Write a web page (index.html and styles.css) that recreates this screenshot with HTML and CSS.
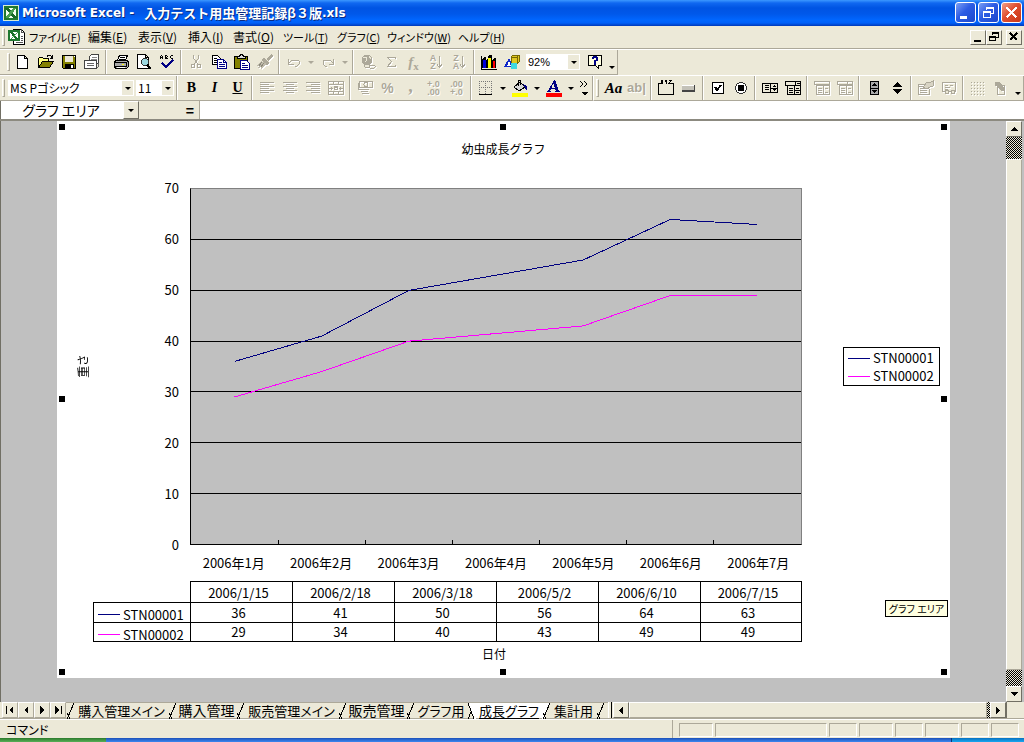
FILE: index.html
```html
<!DOCTYPE html>
<html lang="ja">
<head>
<meta charset="utf-8">
<title>Microsoft Excel - 入力テスト用虫管理記録β３版.xls</title>
<link rel="stylesheet" href="styles.css">
</head>
<body>
<header class="titlebar">
  <svg class="app-icon" width="16" height="16" viewBox="0 0 16 16"><rect width="16" height="16" fill="#d8ecd4"/><rect x="1" y="1" width="14" height="14" fill="#207830"/><rect x="3" y="3" width="10" height="10" fill="#f4fff0"/><path d="M2 3h4l8 10h-4z" fill="#186828"/><path d="M13 3h-3L3 12v1h3z" fill="#48a050"/></svg>
  <h1><span class="latin">Microsoft Excel -</span><span>入力テスト用虫管理記録β３版</span><span class="latin">.xls</span></h1>
  <div class="window-buttons">
    <button class="win" aria-label="最小化"><svg width="19" height="19"><path d="M4 13h7v3H4z" fill="#fff"/></svg></button>
    <button class="win" aria-label="元に戻す"><svg width="19" height="19" fill="none" stroke="#fff"><path d="M7.500 7V4.500h7v6H12M7 5.500h7M4.500 8.500h7v6h-7zM4 9.500h8"/></svg></button>
    <button class="win close" aria-label="閉じる"><svg width="19" height="19" fill="none" stroke="#fff" stroke-width="2"><path d="M4.500 4.500l10 10M14.500 4.500l-10 10"/></svg></button>
  </div>
</header>

<nav class="menubar">
  <i class="grip"></i>
  <svg class="doc-icon" width="17" height="16" viewBox="0 0 17 16"><path d="M5.500 .5h8l3 3v12h-11z" fill="#fff" stroke="#000"/><path d="M13.500 0v3.500H17M13 7h2M13 9h2M13 11h2M8 13h7" fill="none" stroke="#555"/><rect y="1" width="12" height="11" fill="#207830"/><rect x="2" y="3" width="8" height="7" fill="#fff"/><path d="M2 3h3l5 7H7z" fill="#187028"/><path d="M9 3L2 10h2l6-7z" fill="#48a050"/></svg>
  <div class="menus">
    <button class="kana">ファイル(<u>F</u>)</button><button>編集(<u>E</u>)</button><button>表示(<u>V</u>)</button><button>挿入(<u>I</u>)</button><button>書式(<u>O</u>)</button><button class="kana">ツール(<u>T</u>)</button><button class="kana">グラフ(<u>C</u>)</button><button class="kana">ウィンドウ(<u>W</u>)</button><button class="kana">ヘルプ(<u>H</u>)</button>
  </div>
  <div class="mdi-buttons">
    <button class="raised" aria-label="ブックの最小化"><svg width="12" height="12"><path d="M2 9h7v2H2z"/></svg></button>
    <button class="raised" aria-label="ブックを元に戻す"><svg width="12" height="12" fill="none" stroke="#000"><path d="M4.500 4V1.500h6v5H8M4 2.500h7M1.500 5.500h6v4h-6zM1 6.500h7"/></svg></button>
    <button class="raised apart" aria-label="ブックを閉じる"><svg width="12" height="12" fill="none" stroke="#000" stroke-width="2"><path d="M2 2l7 7M9 2l-7 7"/></svg></button>
  </div>
</nav>

<div class="toolrow">
  <div class="toolbar standard" role="toolbar" aria-label="標準">
    <i class="grip"></i>
    <button class="tool" aria-label="新規作成"><svg width="16" height="16"><path d="M2.500 1.500h7l3 3v10h-10zM9.500 1.500v3h3" fill="#fff" stroke="#000"/></svg></button>
    <button class="tool" aria-label="開く"><svg width="16" height="16"><path d="M.5 13V4.500l1-1h3l1 1h5v3" fill="#ffff80" stroke="#000"/><path d="M.5 13.500l4-6h11l-4 6z" fill="#848200" stroke="#000"/><path d="M9 2.500c2-2 4-1 5 1M14.500 1v3H12" fill="none" stroke="#000"/></svg></button>
    <button class="tool" aria-label="上書き保存"><svg width="16" height="16"><path d="M1.500 1.500h13v13h-12l-1-1z" fill="#848200" stroke="#000"/><path d="M4 2h8v6H4z" fill="#ece9d8"/><path d="M4 10h9v5H4z"/><path d="M10 11h2v3h-2zM13 2h1v1h-1z" fill="#fff"/></svg></button>
    <button class="tool" aria-label="電子メール"><svg width="16" height="16"><path d="M5.500 7V2.500l2-2h7v8l-2 2" fill="#fff" stroke="#444"/><path d="M8 3h5M7 5h6" stroke="#888"/><path d="M.5 6.500h12v8H.5z" fill="#fff" stroke="#444"/><path d="M3 9.500h7M3 11.500h7M12.500 14.500l2-2v-4" fill="none" stroke="#666"/></svg></button>
    <i class="sep"></i>
    <button class="tool" aria-label="印刷"><svg width="16" height="16"><path d="M4.500 6l2-4.500h8L12.500 6" fill="#fff" stroke="#000"/><path d="M7 3h5M6 5h6" stroke="#000"/><path d="M1.500 7.500l2-1h11l1 1v5l-2 2h-11l-1-2z" fill="#aaa" stroke="#000"/><path d="M1 8.500h12v4H1M13 9l2-2" fill="none" stroke="#000"/><path d="M9 10h2v1H9z" fill="#ff0"/><path d="M4 13h8" stroke="#fff"/></svg></button>
    <button class="tool" aria-label="印刷プレビュー"><svg width="16" height="16"><path d="M1.500 .5h8l3 3v11h-11zM9.500 .5v3h3" fill="#fff" stroke="#000"/><circle cx="9" cy="8" r="3.500" fill="#9cd8e0" stroke="#333"/><path d="M11 11l4 4" stroke="#000" stroke-width="2"/></svg></button>
    <button class="tool" aria-label="スペルチェック"><svg width="16" height="16"><path d="M1.500 5V2M2 1.500h1M3.500 2v3M1 3.500h3M6.500 1v4M6 1.500h2M8.500 2v1M6 3.500h2M8.500 4v1M6 4.500h2M14 1.500h-2M11.500 2v2M12 4.500h2" fill="none" stroke="#000"/><path d="M3 9l4 4 7-7" fill="none" stroke="#000084" stroke-width="2"/></svg></button>
    <i class="sep"></i>
    <button class="tool" disabled aria-label="切り取り"><svg width="16" height="16" class="line"><path d="M5.500 1v3l4 6M10.500 1v3l-4 6"/><circle cx="5" cy="12" r="2"/><circle cx="11" cy="12" r="2"/></svg></button>
    <button class="tool" aria-label="コピー"><svg width="16" height="16" fill="#fff"><path d="M1.500 1.500h5l3 3v6h-8z" stroke="#000"/><path d="M3 4h3M3 6h4M3 8h4" stroke="#000"/><path d="M6.500 5.500h6l3 3v6h-9z" stroke="#000084"/><path d="M12.500 5v3.500H16M8 8h3M8 10h6M8 12h6" fill="none" stroke="#000084"/></svg></button>
    <button class="tool" aria-label="貼り付け"><svg width="16" height="16"><rect x=".5" y="2.500" width="13" height="12" rx="1" fill="#848200" stroke="#000"/><path d="M3.500 4.500v-2h2l1-2h2l1 2h2v2z" fill="#ddd" stroke="#000"/><path d="M6.500 6.500h6l3 3v6h-9z" fill="#fff" stroke="#000084"/><path d="M8 9h3M8 11h6M8 13h6" stroke="#000084"/></svg></button>
    <button class="tool" disabled aria-label="書式のコピー"><svg width="16" height="16"><path d="M15 0l1 2-5 5-2-2zM7 4l5 5-2 2-6-5z" fill="#aca899"/><path d="M4 7l-4 5h2l-1 2 3-1v2l6-5z" fill="#c0bcac"/><path d="M5 8l-3 4M7 9l-3 4" stroke="#8c897c"/></svg></button>
    <i class="sep"></i>
    <button class="tool" disabled aria-label="元に戻す"><svg width="16" height="16" class="line"><path d="M2.500 5v5h5M3 9l3-3h4l3 1v3l-2 2H9"/></svg></button>
    <button class="drop" disabled aria-label="元に戻す一覧"></button>
    <button class="tool" disabled aria-label="やり直し"><svg width="16" height="16" class="line"><path d="M13.500 5v5h-5M13 9l-3-3H6L3 7v3l2 2h2"/></svg></button>
    <button class="drop" disabled aria-label="やり直し一覧"></button>
    <i class="sep"></i>
    <button class="tool" disabled aria-label="ハイパーリンク"><svg width="16" height="16" class="line"><circle cx="7" cy="6" r="5" fill="#aca899"/><path d="M3 4l3-1 1 3-2 2M9 2l2 3" stroke="#ece9d8"/><rect x="4" y="10" width="6" height="3" rx="1" fill="#ece9d8"/><rect x="9" y="11" width="6" height="3" rx="1"/></svg></button>
    <button class="tool" disabled aria-label="オート SUM"><svg width="16" height="16" class="line"><path d="M12.500 5V3.500h-8l4 4-4 5h8V11"/></svg></button>
    <button class="tool serif-icon" disabled><i>f</i><small>x</small></button>
    <button class="tool sort" disabled aria-label="昇順"><span>A<br>Z</span><svg width="7" height="14" class="line"><path d="M3.500 1v11M1 9.500l2.500 3L6 9.500"/></svg></button>
    <button class="tool sort" disabled aria-label="降順"><span>Z<br>A</span><svg width="7" height="14" class="line"><path d="M3.500 1v11M1 9.500l2.500 3L6 9.500"/></svg></button>
    <i class="sep"></i>
    <button class="tool" aria-label="グラフ ウィザード"><svg width="16" height="16"><path d="M1 14V5l2-2h2v3l2-2V2l2-1h2v5l2-2h2v10z" fill="#000"/><path d="M2 6h3v8H2z" fill="#0000d8"/><path d="M7 4h3v10H7z" fill="#ff0"/><path d="M12 7h2v7h-2z" fill="#f00"/><path d="M0 15h16M.5 2v13" stroke="#000"/></svg></button>
    <button class="tool" aria-label="図形描画"><svg width="16" height="16"><path d="M7 3l2-2h6v7l-2 2H7z" fill="#e0c820" stroke="#776800"/><path d="M7 3.500h6V10M13 3l2-2" fill="none" stroke="#776800"/><path d="M5 4l4 9H0z" fill="#1028c8"/><path d="M5 7l2 5H3z" fill="#fff"/><circle cx="10" cy="12" r="3.500" fill="#40d8e0"/></svg></button>
    <label class="combo zoom"><select aria-label="ズーム"><option>92%</option></select><span class="arrow"></span></label>
    <button class="tool" aria-label="ヘルプ"><svg width="16" height="16"><path d="M1.500 1.500h13v10h-3v3l-3-3h-7z" fill="#ffffe1" stroke="#000"/><path d="M6 5V4l1-1h2l1 1v2L8 7v1.500M8 9v1.500" fill="none" stroke="#000084" stroke-width="2"/></svg></button>
    <button class="drop low" aria-label="ボタンの追加"></button>
  </div>
</div>

<div class="toolrow">
  <div class="toolbar" role="toolbar" aria-label="書式設定">
    <i class="grip"></i>
    <label class="combo font"><select aria-label="フォント"><option>MS Pゴシック</option></select><span class="arrow"></span></label>
    <label class="combo size"><select aria-label="フォント サイズ"><option>11</option></select><span class="arrow"></span></label>
    <i class="sep"></i>
    <button class="tool letter"><b>B</b></button>
    <button class="tool letter"><i>I</i></button>
    <button class="tool letter"><u>U</u></button>
    <i class="sep"></i>
    <button class="tool" disabled aria-label="左揃え"><svg width="16" height="16" class="line"><path d="M1 2.500h14M1 4.500h9M1 6.500h14M1 8.500h9M1 10.500h14M1 12.500h9"/></svg></button>
    <button class="tool" disabled aria-label="中央揃え"><svg width="16" height="16" class="line"><path d="M1 2.500h14M4 4.500h8M1 6.500h14M4 8.500h8M1 10.500h14M4 12.500h8"/></svg></button>
    <button class="tool" disabled aria-label="右揃え"><svg width="16" height="16" class="line"><path d="M1 2.500h14M6 4.500h9M1 6.500h14M6 8.500h9M1 10.500h14M6 12.500h9"/></svg></button>
    <button class="tool" disabled aria-label="セルを結合して中央揃え"><svg width="16" height="16" class="line"><path d="M.5 1.500h15v13H.5zM0 4.500h16M0 11.500h16M5.500 2v2M10.500 2v2M5.500 12v2M10.500 12v2M1 8h4M3.500 6.500v3M11 8h4M12.500 6.500v3M6 6.500h3v3H6.500v-2H9v2h1"/></svg></button>
    <i class="sep"></i>
    <button class="tool" disabled aria-label="通貨スタイル"><svg width="16" height="16" class="line"><path d="M2.500 1.500h13v6h-13zM1 3v6h9"/><circle cx="9" cy="4.500" r="2"/><path d="M5 9.500h7M4 11.500h7M5 13.500h7"/></svg></button>
    <button class="tool percent" disabled>%</button>
    <button class="tool comma" disabled>,</button>
    <button class="tool decimals" disabled><span>+.0<br>.00</span></button>
    <button class="tool decimals" disabled><span>.00<br>+.0</span></button>
    <i class="sep"></i>
    <button class="tool" aria-label="罫線"><svg width="16" height="16" fill="none" stroke="#777"><path d="M1 1.500h13M1 7.500h13M1.500 1v13M7.500 1v13M13.500 1v13" stroke-dasharray="1 1"/><path d="M1 14.500h13" stroke="#000"/></svg></button>
    <button class="drop" aria-label="罫線の種類"></button>
    <button class="tool" aria-label="塗りつぶしの色"><svg width="16" height="17"><path d="M2 7l6-5 5 5-6 4z" fill="#d8d8d8" stroke="#000"/><path d="M6.500 6V1l2-1v5" fill="none" stroke="#000"/><path d="M11 4l4 2v5l-2-3z" fill="#000084"/><path d="M0 13h16v4H0z" fill="#ff0"/></svg></button>
    <button class="drop" aria-label="塗りつぶしの色一覧"></button>
    <button class="tool" aria-label="フォントの色"><svg width="16" height="17"><path d="M8 0h1l4 11h1v1H9v-1h1L9 9H5l-1 2h1v1H1v-1h1zM7 3L5.500 8H9z" fill="#000084"/><path d="M0 13h16v4H0z" fill="#f00"/></svg></button>
    <button class="drop" aria-label="フォントの色一覧"></button>
    <button class="more" aria-label="その他のボタン"><svg width="10" height="16" fill="none" stroke="#000"><path d="M1 1l3 3-3 3M5 1l3 3-3 3"/><path d="M2 12h7l-3.500 3.500z" fill="#000" stroke="none"/></svg></button>
  </div>
  <div class="toolbar forms" role="toolbar" aria-label="フォーム">
    <i class="grip"></i>
    <button class="tool aa"><i>Aa</i></button>
    <button class="tool ab" disabled>ab|</button>
    <i class="sep"></i>
    <button class="tool" aria-label="グループ ボックス"><svg width="16" height="16" fill="none" stroke="#000"><path d="M3 3.500H.5v11h15v-11H13M3 0l2 4M5 0L3 4M7 0l1 2 1-2M8 2v2M11 .5h2l-2 3h2"/></svg></button>
    <button class="tool" aria-label="ボタン"><svg width="16" height="16"><path d="M1 5h13v7H1z" fill="#444"/><path d="M1 5h12v5H1z" fill="#c4c2b8"/><path d="M1 5.500h12" stroke="#fff"/></svg></button>
    <i class="sep"></i>
    <button class="tool" aria-label="チェック ボックス"><svg width="16" height="16"><path d="M2.500 2.500h11v11h-11z" fill="#fff" stroke="#000"/><path d="M5 7l2 3 4-5" fill="none" stroke="#000" stroke-width="2"/></svg></button>
    <button class="tool" aria-label="オプション ボタン"><svg width="16" height="16"><circle cx="8" cy="8" r="5.500" fill="#fff" stroke="#333"/><circle cx="8" cy="8" r="3.500"/></svg></button>
    <i class="sep"></i>
    <button class="tool" aria-label="リスト ボックス"><svg width="16" height="16" fill="none" stroke="#000"><path d="M.5 3.500h15v9H.5zM8.500 3v10M9 8h7M3 5.500h4M3 7.500h4M3 9.500h4M11 6.500h3M12 5.500h1M11 9.500h3M12 10.500h1"/></svg></button>
    <button class="tool" aria-label="コンボ ボックス"><svg width="16" height="16" fill="none" stroke="#000"><path d="M.5 1.500h15v4H.5zM2.500 5.500h13v9h-13zM9.500 6v8M10 10h6M10.500 1v4M12 3h3M4 8.500h4M4 10.500h4M4 12.500h4M11 8h3M11 12h3"/></svg></button>
    <i class="sep"></i>
    <button class="tool" disabled aria-label="コンボ リスト"><svg width="16" height="16" class="line"><path d="M.5 1.500h15v3H.5zM2.500 5.500h13v9h-13zM9.500 6v8M4 8.500h4M4 10.500h4M4 12.500h4M11 8h3M11 12h3"/></svg></button>
    <button class="tool" disabled aria-label="コンボ ドロップダウン"><svg width="16" height="16" class="line"><path d="M.5 1.500h15v3H.5zM2.500 5.500h13v9h-13zM9.500 6v8M10.500 1v4M4 8.500h4M4 10.500h4M4 12.500h4M11 8h3M11 12h3"/></svg></button>
    <i class="sep"></i>
    <button class="tool" aria-label="スクロール バー"><svg width="16" height="16"><path d="M4.500 1.500h8v13h-8zM4 8h9" fill="#aaa" stroke="#000"/><path d="M8.500 3L11 6H6zM8.500 13L11 10H6z"/></svg></button>
    <button class="tool" aria-label="スピン ボタン"><svg width="16" height="16"><path d="M8 2l5 5H3zM8 14l5-5H3z"/></svg></button>
    <i class="sep"></i>
    <button class="tool" disabled aria-label="コントロールの書式設定"><svg width="16" height="16" class="line"><path d="M8 4.500H.5v10h11V9M0 6h7M2 8.500h5M2 10.500h7M2 12.500h7"/><path d="M5 7l4-5h4l2-1v5l-3 1-3 2z" fill="#d8d4c4"/></svg></button>
    <button class="tool" disabled aria-label="コードの編集"><svg width="16" height="16" class="line"><path d="M1.500 2.500h13v9h-13zM4 5h3M9 5h3M4 7h5M4 9h3"/><circle cx="6" cy="12" r="2" fill="#ece9d8"/><circle cx="12" cy="12" r="2" fill="#ece9d8"/></svg></button>
    <i class="sep"></i>
    <button class="tool" disabled aria-label="グリッドの切り替え"><svg width="16" height="16" class="line"><path d="M1 2.500h14M1 5.500h14M1 8.500h14M1 11.500h14M1 14.500h14" stroke-dasharray="1 2"/></svg></button>
    <button class="tool" disabled aria-label="ダイアログの実行"><svg width="16" height="16" class="line"><path d="M4.500 5.500h7v9h-7z"/><path d="M2 2h4l6 8-3 1-5-6H2z" fill="#aca899"/></svg></button>
    <button class="drop low" aria-label="ボタンの追加"></button>
  </div>
</div>

<div class="formulabar">
  <input class="namebox" aria-label="名前ボックス" value="グラフ エリア">
  <button class="raised name-drop" aria-label="名前一覧"><span class="arrow"></span></button>
  <button class="equals" aria-label="数式の編集">=</button>
  <input class="formula" aria-label="数式バー">
</div>

<main class="workspace">
  <section class="chart" aria-label="グラフ エリア">
    <h2 class="chart-title">幼虫成長グラフ</h2>
    <div class="y-title"><span>重さ</span></div>
    <div class="y-axis"><span>70</span><span>60</span><span>50</span><span>40</span><span>30</span><span>20</span><span>10</span><span>0</span></div>
    <svg class="plot" viewBox="0 0 70 70" preserveAspectRatio="none" aria-label="成長グラフ">
      <path class="gridline" d="M0 10H70M0 20H70M0 30H70M0 40H70M0 50H70M0 60H70"/>
      <path class="gridline" d="M10 69.200V70M20 69.200V70M30 69.200V70M40 69.200V70M50 69.200V70M60 69.200V70"/>
      <polyline class="series first" points="5,34 15,29 25,20 45,14 55,6 65,7"/>
      <polyline class="series second" points="5,41 15,36 25,30 45,27 55,21 65,21"/>
    </svg>
    <div class="legend">
      <div><i class="key first"></i>STN00001</div>
      <div><i class="key second"></i>STN00002</div>
    </div>
    <div class="x-axis"><span>2006年1月</span><span>2006年2月</span><span>2006年3月</span><span>2006年4月</span><span>2006年5月</span><span>2006年6月</span><span>2006年7月</span></div>
    <table class="data">
      <thead><tr><td class="blank"></td><th>2006/1/15</th><th>2006/2/18</th><th>2006/3/18</th><th>2006/5/2</th><th>2006/6/10</th><th>2006/7/15</th></tr></thead>
      <tbody>
        <tr><th scope="row"><div><i class="key first"></i>STN00001</div></th><td>36</td><td>41</td><td>50</td><td>56</td><td>64</td><td>63</td></tr>
        <tr><th scope="row"><div><i class="key second"></i>STN00002</div></th><td>29</td><td>34</td><td>40</td><td>43</td><td>49</td><td>49</td></tr>
      </tbody>
    </table>
    <div class="x-title">日付</div>
    <i class="handle top left"></i><i class="handle top center"></i><i class="handle top right"></i>
    <i class="handle middle left"></i><i class="handle middle right"></i>
    <i class="handle bottom left"></i><i class="handle bottom center"></i><i class="handle bottom right"></i>
    <div class="tooltip" role="tooltip">グラフ エリア</div>
  </section>
  <div class="vscroll">
    <button class="raised" aria-label="上へ"><svg width="7" height="4"><path d="M0 4h7L3.500 0z"/></svg></button>
    <i class="hatch upper"></i><i class="thumb"></i><i class="hatch lower"></i>
    <button class="raised" aria-label="下へ"><svg width="7" height="4"><path d="M0 0h7L3.500 4z"/></svg></button>
  </div>
</main>

<div class="sheetbar">
  <div class="sheet-nav">
    <button aria-label="先頭のシート"><svg width="8" height="8"><path d="M0 0h1v8H0zM7 0v8L3 4z"/></svg></button>
    <button aria-label="前のシート"><svg width="8" height="8"><path d="M6 0v8L2 4z"/></svg></button>
    <button aria-label="次のシート"><svg width="8" height="8"><path d="M2 0v8l4-4z"/></svg></button>
    <button aria-label="最後のシート"><svg width="8" height="8"><path d="M1 0v8l4-4zM7 0h1v8H7z"/></svg></button>
  </div>
  <div class="tabs">
    <svg class="edge" width="9" height="16"><path d="M1 16L8 0M1 10l3 6"/></svg><button class="long">購入管理メイン</button>
    <svg class="edge" width="9" height="16"><path d="M1 16L8 0M1 10l3 6"/></svg><button>購入管理</button>
    <svg class="edge" width="9" height="16"><path d="M1 16L8 0M1 10l3 6"/></svg><button class="long">販売管理メイン</button>
    <svg class="edge" width="9" height="16"><path d="M1 16L8 0M1 10l3 6"/></svg><button>販売管理</button>
    <svg class="edge" width="9" height="16"><path d="M1 16L8 0M1 10l3 6"/></svg><button class="medium">グラフ用</button>
    <svg class="edge" width="9" height="16"><path class="fill" d="M1 0h8v16H7z"/><path d="M1 0l6 16M1 16l3-7"/></svg><button class="active">成長グラフ</button>
    <svg class="edge" width="9" height="16"><path class="fill" d="M0 0h8L2 16H0z"/><path d="M1 16L8 0M1 10l3 6"/></svg><button class="short">集計用</button>
    <svg class="edge" width="9" height="16"><path d="M1 16L8 0M1 10l3 6"/></svg>
  </div>
  <i class="splitter"></i>
  <div class="hscroll">
    <button class="raised" aria-label="左へ"><svg width="4" height="7"><path d="M4 0v7L0 3.500z"/></svg></button>
    <i class="thumb"></i><i class="hatch"></i>
    <button class="raised" aria-label="右へ"><svg width="4" height="7"><path d="M0 0v7l4-3.500z"/></svg></button>
  </div>
  <i class="corner"></i>
</div>

<footer class="statusbar">
  <span class="message">コマンド</span>
  <div class="panes"><i class="w34"></i><i class="w112"></i><i class="w28"></i><i class="w34"></i><i class="w28"></i><i class="w34"></i><i class="w28"></i><i class="w28"></i></div>
</footer>
<div class="taskbar"><i class="start"></i><i class="tasks"></i><i class="tray"></i></div>
</body>
</html>
```
FILE: styles.css
```css
* { box-sizing: border-box; }
html, body { height: 100%; }
body {
  margin: 0;
  display: flex;
  flex-direction: column;
  overflow: hidden;
  background: #ece9d8;
  color: #000;
  font: 12px/16px "Noto Sans CJK JP", "Liberation Sans", sans-serif;
  white-space: nowrap;
}
button, input, select {
  font: inherit;
  color: inherit;
  margin: 0;
  padding: 0;
  border: 0;
  border-radius: 0;
  background: none;
}
button { display: flex; align-items: center; justify-content: center; flex: none; }
svg { display: block; flex: none; shape-rendering: crispEdges; }
i { flex: none; }

/* title bar */
.titlebar {
  display: flex;
  align-items: center;
  height: 26px;
  padding: 0 2px 1px 3px;
  background: linear-gradient(#3c98ff 0, #1068f0 3px, #0054e3 8px, #0058ea 14px, #0066ff 20px, #0060f8 23px, #0038b8 26px);
  color: #fff;
}
.titlebar h1 {
  display: flex;
  flex: 1;
  margin: 0 0 0 3px;
  font-size: 13px;
  font-weight: 700;
  text-shadow: 1px 1px 0 #0a2a80;
}
.latin { font-family: "DejaVu Sans", sans-serif; font-size: 12px; }
.latin:first-child { padding-right: 10px; }
.window-buttons { display: flex; gap: 2px; }
.win {
  width: 21px;
  height: 21px;
  border: 1px solid #fff;
  border-radius: 3px;
  background: linear-gradient(135deg, #7c9ff4, #2c5ce4 45%, #1c48cc);
}
.win.close { background: linear-gradient(135deg, #f0a088, #e05030 45%, #c83818); }

/* menu */
.menubar {
  display: flex;
  align-items: center;
  height: 23px;
  padding: 0 2px;
  border-bottom: 1px solid #aca899;
}
.grip {
  width: 3px;
  height: 18px;
  border: 1px solid;
  border-color: #fff #aca899 #aca899 #fff;
}
.menubar .grip { margin-right: 3px; }
.menus {
  display: grid;
  grid-template-columns: 59px 50px 50px 45px 50px 54px 50px 71px 50px;
  margin-left: 4px;
  flex: 1;
  font-feature-settings: "palt";
}
.menus button { justify-content: flex-start; }
.menus .kana { font-size: 11px; }
.mdi-buttons { display: flex; }
.raised {
  width: 16px;
  height: 15px;
  background: #ece9d8;
  border: 1px solid;
  border-color: #fff #716f64 #716f64 #fff;
}
.raised.apart { margin-left: 4px; }

/* toolbars */
.toolrow { display: flex; height: 26px; border-top: 1px solid #fff; }
.toolbar {
  display: flex;
  align-items: center;
  padding-left: 2px;
  border-right: 1px solid #aca899;
  border-bottom: 1px solid #aca899;
}
.toolbar .grip { margin-right: 3px; }
.toolbar.standard { padding-left: 7px; }
.toolbar.standard .grip { margin-right: 1px; }
.toolbar.forms { flex: 1; border-left: 1px solid #fff; }
.tool { width: 23px; height: 23px; }
.tool:disabled { color: #aca899; }
.tool:disabled svg { filter: drop-shadow(1px 1px 0 #fff); }
.line { fill: none; stroke: #aca899; }
.sep {
  width: 6px;
  height: 24px;
  background: linear-gradient(90deg, transparent 2px, #aca899 2px, #aca899 3px, #fff 3px, #fff 4px, transparent 4px);
}
.drop { width: 11px; height: 20px; }
.drop::after, .arrow::after {
  content: "";
  border: 3px solid transparent;
  border-top-color: #000;
  border-bottom-width: 0;
}
.drop:disabled::after { border-top-color: #aca899; }
.drop.low { align-items: flex-end; padding-bottom: 3px; }
.combo { display: flex; height: 16px; background: #fff; }
.combo select { flex: 1; min-width: 0; appearance: none; padding-left: 2px; line-height: 14px; }
.combo .arrow { width: 11px; margin: 1px; background: #ece9d8; }
.arrow { display: flex; align-items: center; justify-content: center; }
.combo.zoom { width: 54px; margin: 0 3px; font-size: 11px; font-family: "Liberation Sans", sans-serif; }
.combo.font { width: 126px; margin-right: 2px; font-feature-settings: "palt"; }
.combo.size { width: 38px; }
.letter { font: 700 14px/16px "Liberation Serif", serif; -webkit-text-stroke: 1px #000; }
.letter i { -webkit-text-stroke: 0; }
.letter { -webkit-text-stroke: 0; }
.aa { font: 700 15px/16px "Liberation Serif", serif; }
.ab { font: 700 13px/16px "Liberation Sans", sans-serif; text-shadow: 1px 1px 0 #fff; }
.serif-icon { font: 700 15px/16px "Liberation Serif", serif; }
.serif-icon small { font-size: 11px; align-self: flex-end; }
.sort { font: 700 9px/8px "Liberation Sans", sans-serif; text-shadow: 1px 1px 0 #fff; }
.percent { font: 700 14px/16px "Liberation Sans", sans-serif; text-shadow: 1px 1px 0 #fff; }
.comma { font: 700 18px/16px "Liberation Serif", serif; padding-bottom: 4px; text-shadow: 1px 1px 0 #fff; }
.decimals { font: 700 9px/8px "Liberation Sans", sans-serif; text-align: right; text-shadow: 1px 1px 0 #fff; }
.more { width: 16px; }

/* formula bar */
.formulabar { display: flex; height: 20px; border-bottom: 2px solid #8c8a80; background: #fff; }
.namebox { width: 123px; padding-right: 2px; text-align: center; font-size: 14px; font-feature-settings: "palt"; border-left: 1px solid #716f64; }
.name-drop { height: 18px; }
.equals { width: 61px; padding-right: 5px; justify-content: flex-end; background: #ece9d8; border-right: 1px solid #aca899; font-weight: 700; font-size: 14px; }
.formula { flex: 1; min-width: 0; }

/* chart sheet */
.workspace { flex: 1; min-height: 0; display: flex; background: #c0c0c0; padding-right: 2px; border-left: 1px solid #716f64; }
.chart {
  position: relative;
  flex: 1;
  display: grid;
  grid-template-columns: 36px 97px 1fr 148px;
  grid-template-rows: 67px 1fr 36px 61px 36px;
  margin: 0 56px 24px 56px;
  background: #fff;
  font-size: 13px;
}
.chart-title {
  grid-area: 1 / 1 / 2 / 5;
  margin: 0;
  padding-top: 20px;
  text-align: center;
  font-size: 12px;
  font-weight: 400;
}
.y-title { grid-area: 2 / 1; display: flex; align-items: center; justify-content: flex-end; padding-right: 2px; font-size: 12px; }
.y-title span { writing-mode: vertical-rl; text-orientation: sideways; transform: rotate(180deg); font-feature-settings: "palt"; }
.y-axis {
  grid-area: 2 / 2;
  display: flex;
  flex-direction: column;
  justify-content: space-between;
  margin: -8px 0;
  padding-right: 11px;
  text-align: right;
}
.plot {
  grid-area: 2 / 3;
  width: 100%;
  height: 100%;
  min-height: 0;
  background: #c0c0c0;
  border: 1px solid;
  border-color: #808080 #808080 #000 #000;
}
.gridline, .series { fill: none; stroke: #000; vector-effect: non-scaling-stroke; }
.series.first { stroke: #000080; }
.series.second { stroke: #f0f; }
.legend {
  grid-area: 2 / 4;
  align-self: center;
  justify-self: end;
  width: 97px;
  margin-right: 10px;
  padding: 1px 0 0 4px;
  border: 1px solid #000;
  line-height: 18px;
}
.legend div, .data th div { display: flex; align-items: center; gap: 3px; }
.key { width: 22px; height: 1px; background: #000080; }
.key.second { background: #f0f; }
.x-axis { grid-area: 3 / 3; display: flex; align-items: center; }
.x-axis span { flex: 1; text-align: center; }
.data { grid-area: 4 / 2 / 5 / 4; width: 100%; table-layout: fixed; border-spacing: 0; line-height: 16px; }
.data th, .data td { height: 20px; padding: 0 6px 0 0; text-align: center; font-weight: 400; border: 0 solid #000; border-width: 1px 0 0 1px; }
.data thead th, .data thead td { height: 21px; padding-top: 2px; }
.data tr > :first-child { width: 97px; padding: 0 0 0 4px; }
.data tr > :last-child { border-right-width: 1px; }
.data tbody tr:last-child > * { border-bottom-width: 1px; }
.data thead .blank { border: 0; }
.data th div { margin-bottom: -2px; padding-top: 2px; line-height: 15px; }
.x-title { grid-area: 5 / 3; padding: 4px 4px 0 0; text-align: center; font-size: 12px; }
.handle { position: absolute; width: 6px; height: 6px; background: #000; }
.handle.top { top: 3px; }
.handle.middle { top: calc(50% - 4px); }
.handle.bottom { bottom: 3px; }
.handle.left { left: 2px; }
.handle.center { left: calc(50% - 4px); }
.handle.right { right: 3px; }
.tooltip {
  position: absolute;
  right: 2px;
  bottom: 61px;
  width: 63px;
  height: 17px;
  border: 1px solid #000;
  background: #ffffe1;
  text-align: center;
  font-size: 10px;
  line-height: 15px;
  font-feature-settings: "palt";
}

/* scroll bars */
.vscroll { width: 16px; display: flex; flex-direction: column; background: #ece9d8; }
.vscroll .raised { height: 16px; }
.hatch { background: repeating-conic-gradient(#000 0 25%, #ece9d8 0 50%) 0 0 / 2px 2px; }
.hatch.upper { height: 22px; }
.hatch.lower { height: 16px; }
.thumb { flex: 1; border: 1px solid; border-color: #fff #aca899 #aca899 #fff; background: #ece9d8; }

/* sheet tabs */
.sheetbar { display: flex; height: 17px; padding-left: 2px; border-bottom: 1px solid #aca899; }
.sheet-nav { display: flex; }
.sheet-nav button { width: 16px; border: 1px solid; border-color: #fff #aca899 #aca899 #fff; }
.tabs { display: flex; width: 542px; height: 16px; border-top: 1px solid #aca899; font-size: 13px; line-height: 15px; font-feature-settings: "palt"; }
.tabs button { width: 59px; height: 15px; font-size: 14px; }
.tabs .long { width: 93px; font-size: 13px; }
.tabs .medium { width: 52px; font-size: 13px; }
.tabs .short { width: 45px; font-size: 13px; }
.tabs .active { width: 66px; font-size: 13px; background: #fff; text-decoration: underline; text-underline-offset: 2px; }
.edge { fill: none; stroke: #000; }
.edge .fill { fill: #fff; stroke: none; }
.splitter { width: 4px; border-left: 1px solid #fff; border-right: 1px solid #000; margin-right: 1px; }
.hscroll { flex: 1; display: flex; }
.hscroll .raised { height: 16px; }
.hscroll .hatch { width: 3px; }
.corner { width: 18px; border-left: 1px solid #716f64; }

/* status bar */
.statusbar { display: flex; justify-content: space-between; height: 19px; padding-left: 6px; padding-right: 5px; border-top: 1px solid #fff; font-feature-settings: "palt"; }
.message { line-height: 19px; }
.panes { display: flex; gap: 2px; padding: 3px 0 1px 6px; border-left: 1px solid #aca899; }
.panes i { border: 1px solid; border-color: #aca899 #fff #fff #aca899; }
.w28 { width: 28px; }
.w34 { width: 34px; }
.w112 { width: 112px; }

/* taskbar */
.taskbar { display: flex; height: 4px; }
.start { width: 106px; background: linear-gradient(#2c7a2c, #58b058); }
.tasks { flex: 1; background: linear-gradient(#1c50b8, #3c88f0); }
.tray { width: 73px; background: linear-gradient(#0870c0, #18a8f0); border-left: 1px solid #083878; }
```
